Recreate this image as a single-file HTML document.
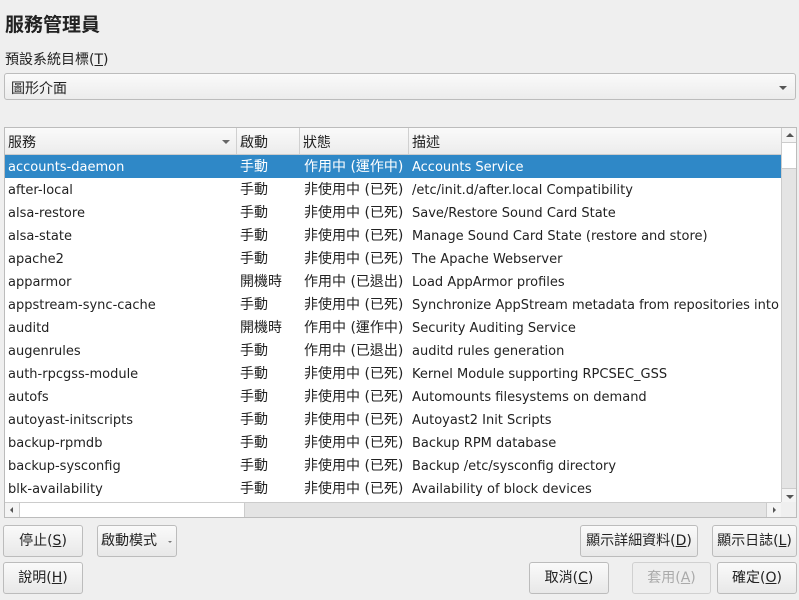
<!DOCTYPE html>
<html><head><meta charset="utf-8"><style>
*{box-sizing:border-box;margin:0;padding:0}
body{width:799px;height:600px;background:#efefef;font-family:"DejaVu Sans","Noto Sans CJK TC",sans-serif;font-size:13px;color:#222;position:relative;overflow:hidden}
.abs{position:absolute}
.title{left:5px;top:10px;font-size:19px;font-weight:bold;font-family:"Liberation Sans","Noto Sans CJK TC",sans-serif}
.lbl{left:5px;top:49px;font-size:14px}
.combo{left:4px;top:73px;width:792px;height:27px;border:1px solid #bcbcbc;border-radius:3px;background:linear-gradient(#fafafa,#ececec);padding:4px 6px;font-size:14px}
.arr{width:0;height:0;border-left:4px solid transparent;border-right:4px solid transparent;border-top:4px solid #555}
.tbl{left:4px;top:127px;width:793px;height:391px;border:1px solid #bcbcbc;background:#fff;overflow:hidden}
.hdr{position:absolute;top:0;left:0;width:777px;height:27px;background:linear-gradient(#fafafa,#ececec);border-bottom:1px solid #ccc;font-size:14px}
.hc{position:absolute;top:0;height:26px;line-height:30px;padding-left:3px;border-right:1px solid #d0d0d0}
.row{position:absolute;left:0;width:776px;height:23px;line-height:25px;white-space:nowrap}
.row span{position:absolute;top:0}
.sel{background:#2f88c7;color:#fff}
.c1{left:3px}.c2{left:235px;font-size:14px}.c3{left:299px;font-size:14px}.c4{left:407px}
.vs{position:absolute;left:776px;top:0;width:16px;height:375px;background:#e4e4e4;border-left:1px solid #ccc}
.hs{position:absolute;left:0;top:374px;width:776px;height:16px;background:#e4e4e4;border-top:1px solid #ccc}
.btn{position:absolute;height:32px;border:1px solid #bcbcbc;border-radius:3px;background:linear-gradient(#fafafa,#e8e8e8);text-align:center;line-height:31px;font-size:14px}
u{text-decoration:underline}
</style></head><body>
<div class="abs title">服務管理員</div>
<div class="abs lbl">預設系統目標(<u>T</u>)</div>
<div class="abs combo">圖形介面<div class="arr abs" style="right:8px;top:12px"></div></div>
<div class="abs tbl">
 <div class="hdr">
  <div class="hc" style="left:0;width:232px">服務<div class="arr abs" style="right:6px;top:12px;border-top-color:#666"></div></div>
  <div class="hc" style="left:232px;width:63px">啟動</div>
  <div class="hc" style="left:295px;width:109px">狀態</div>
  <div class="hc" style="left:404px;width:373px;border-right:0">描述</div>
 </div>
 <div class="row sel" style="top:27px"><span class="c1">accounts-daemon</span><span class="c2">手動</span><span class="c3">作用中 (運作中)</span><span class="c4">Accounts Service</span></div>
 <div class="row" style="top:50px"><span class="c1">after-local</span><span class="c2">手動</span><span class="c3">非使用中 (已死)</span><span class="c4">/etc/init.d/after.local Compatibility</span></div>
 <div class="row" style="top:73px"><span class="c1">alsa-restore</span><span class="c2">手動</span><span class="c3">非使用中 (已死)</span><span class="c4">Save/Restore Sound Card State</span></div>
 <div class="row" style="top:96px"><span class="c1">alsa-state</span><span class="c2">手動</span><span class="c3">非使用中 (已死)</span><span class="c4">Manage Sound Card State (restore and store)</span></div>
 <div class="row" style="top:119px"><span class="c1">apache2</span><span class="c2">手動</span><span class="c3">非使用中 (已死)</span><span class="c4">The Apache Webserver</span></div>
 <div class="row" style="top:142px"><span class="c1">apparmor</span><span class="c2">開機時</span><span class="c3">作用中 (已退出)</span><span class="c4">Load AppArmor profiles</span></div>
 <div class="row" style="top:165px"><span class="c1">appstream-sync-cache</span><span class="c2">手動</span><span class="c3">非使用中 (已死)</span><span class="c4">Synchronize AppStream metadata from repositories into</span></div>
 <div class="row" style="top:188px"><span class="c1">auditd</span><span class="c2">開機時</span><span class="c3">作用中 (運作中)</span><span class="c4">Security Auditing Service</span></div>
 <div class="row" style="top:211px"><span class="c1">augenrules</span><span class="c2">手動</span><span class="c3">作用中 (已退出)</span><span class="c4">auditd rules generation</span></div>
 <div class="row" style="top:234px"><span class="c1">auth-rpcgss-module</span><span class="c2">手動</span><span class="c3">非使用中 (已死)</span><span class="c4">Kernel Module supporting RPCSEC_GSS</span></div>
 <div class="row" style="top:257px"><span class="c1">autofs</span><span class="c2">手動</span><span class="c3">非使用中 (已死)</span><span class="c4">Automounts filesystems on demand</span></div>
 <div class="row" style="top:280px"><span class="c1">autoyast-initscripts</span><span class="c2">手動</span><span class="c3">非使用中 (已死)</span><span class="c4">Autoyast2 Init Scripts</span></div>
 <div class="row" style="top:303px"><span class="c1">backup-rpmdb</span><span class="c2">手動</span><span class="c3">非使用中 (已死)</span><span class="c4">Backup RPM database</span></div>
 <div class="row" style="top:326px"><span class="c1">backup-sysconfig</span><span class="c2">手動</span><span class="c3">非使用中 (已死)</span><span class="c4">Backup /etc/sysconfig directory</span></div>
 <div class="row" style="top:349px"><span class="c1">blk-availability</span><span class="c2">手動</span><span class="c3">非使用中 (已死)</span><span class="c4">Availability of block devices</span></div>
 <div class="vs">
  <div style="position:absolute;top:0;left:0;width:15px;height:15px;background:#f4f4f4;border-bottom:1px solid #ccc"><div class="abs" style="left:4px;top:5px;width:0;height:0;border-left:4px solid transparent;border-right:4px solid transparent;border-bottom:4px solid #555"></div></div>
  <div style="position:absolute;top:15px;left:0;width:15px;height:26px;background:#fff;border-bottom:1px solid #ccc"></div>
  <div style="position:absolute;bottom:0;left:0;width:15px;height:15px;background:#f4f4f4;border-top:1px solid #ccc"><div class="abs" style="left:4px;top:6px;width:0;height:0;border-left:4px solid transparent;border-right:4px solid transparent;border-top:4px solid #555"></div></div>
 </div>
 <div class="hs">
  <div style="position:absolute;left:0;top:0;width:15px;height:15px;background:#f4f4f4;border-right:1px solid #ccc"><div class="abs" style="left:5px;top:4px;border-top:3px solid transparent;border-bottom:3px solid transparent;border-right:3px solid #555"></div></div>
  <div style="position:absolute;left:15px;top:0;width:225px;height:15px;background:#fff;border-right:1px solid #ccc"></div>
  <div style="position:absolute;right:0;top:0;width:15px;height:15px;background:#f4f4f4;border-left:1px solid #ccc"><div class="abs" style="left:6px;top:4px;border-top:3px solid transparent;border-bottom:3px solid transparent;border-left:3px solid #555"></div></div>
 </div>
 <div style="position:absolute;left:776px;top:374px;width:16px;height:16px;background:#efefef"></div>
</div>
<div class="btn" style="left:3px;top:525px;width:80px">停止(<u>S</u>)</div>
<div class="btn" style="left:97px;top:525px;width:80px;text-align:left;padding-left:3px">啟動模式<div class="arr abs" style="right:4px;top:15px;border-width:2px;border-top:2px solid #777"></div></div>
<div class="btn" style="left:580px;top:525px;width:118px">顯示詳細資料(<u>D</u>)</div>
<div class="btn" style="left:712px;top:525px;width:85px">顯示日誌(<u>L</u>)</div>
<div class="btn" style="left:3px;top:562px;width:80px">說明(<u>H</u>)</div>
<div class="btn" style="left:529px;top:562px;width:80px">取消(<u>C</u>)</div>
<div class="btn" style="left:632px;top:562px;width:79px;color:#aaa;background:#eee;border-color:#d0d0d0">套用(<u>A</u>)</div>
<div class="btn" style="left:717px;top:562px;width:80px">確定(<u>O</u>)</div>
</body></html>
